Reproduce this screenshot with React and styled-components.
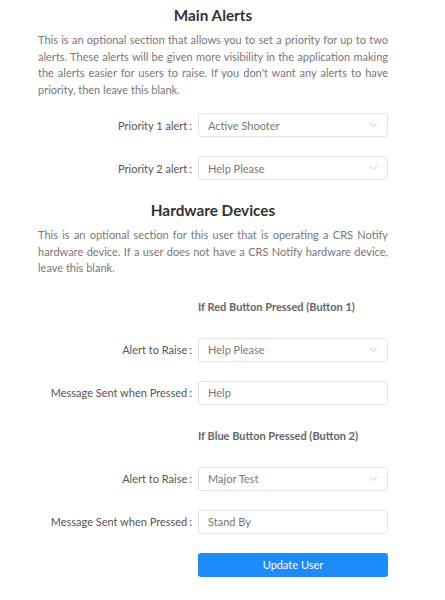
import styled, { createGlobalStyle } from "styled-components";

const GlobalStyle = createGlobalStyle`
    body {
        margin: 0;
        background: #fff;
        font-family: Lato, "Noto Sans", sans-serif;
    }
`;

const Page = styled.div`
    width: 350px;
    padding: 4px 0 20px 38px;
`;

const Title = styled.h2`
    margin: ${(p) => p.$top || 0}px 0 0;
    font-size: 15.3px;
    font-weight: 700;
    color: #333;
    text-align: center;
    line-height: 22px;
`;

const Intro = styled.p`
    margin: 6px 0 0;
    font-size: 11px;
    line-height: 16.5px;
    color: #777;
    text-align: justify;
`;

const Form = styled.div`
    display: flex;
    flex-direction: column;
    gap: 19px;
    margin: ${(p) => p.$top || 0}px 0 0;
`;

const Row = styled.div`
    display: grid;
    grid-template-columns: 160px 190px;
    align-items: center;
`;

const Label = styled.label`
    text-align: right;
    padding-right: 6px;
    font-size: 11px;
    color: #555;
    white-space: nowrap;

    &::after {
        content: ":";
        margin-left: 2px;
    }
`;

const Field = styled.div`
    position: relative;
    height: 24px;
    box-sizing: border-box;
    border: 1px solid #e3e3e3;
    border-radius: 3px;
    background: #fff;
    display: flex;
    align-items: center;
    padding: 0 9px;
    font-size: 11px;
    color: #777;
`;

const Arrow = styled.svg`
    position: absolute;
    right: 9px;
    top: 8px;
`;

const SubHead = styled.div`
    grid-column: 2;
    font-size: 11px;
    font-weight: 700;
    color: #666;
    line-height: 24px;
`;

const Button = styled.button`
    grid-column: 2;
    height: 24px;
    border: none;
    border-radius: 3px;
    background: #1d8cf8;
    color: #fff;
    font-family: inherit;
    font-size: 11px;
`;

function Select({ value }) {
    return (
        <Field>
            {value}
            <Arrow width="9" height="6" viewBox="0 0 9 6">
                <path d="M1 1 L4.5 4.5 L8 1" fill="none" stroke="#ccc" strokeWidth="1" />
            </Arrow>
        </Field>
    );
}

export default function App() {
    return (
        <>
            <GlobalStyle />
            <Page>
                <Title>Main Alerts</Title>
                <Intro>
                    This is an optional section that allows you to set a priority for up to two
                    alerts. These alerts will be given more visibility in the application making
                    the alerts easier for users to raise. If you don't want any alerts to have
                    priority, then leave this blank.
                </Intro>
                <Form $top={15}>
                    <Row>
                        <Label>Priority 1 alert</Label>
                        <Select value="Active Shooter" />
                    </Row>
                    <Row>
                        <Label>Priority 2 alert</Label>
                        <Select value="Help Please" />
                    </Row>
                </Form>

                <Title $top={19}>Hardware Devices</Title>
                <Intro>
                    This is an optional section for this user that is operating a CRS Notify
                    hardware device. If a user does not have a CRS Notify hardware device,
                    leave this blank.
                </Intro>
                <Form $top={18}>
                    <Row>
                        <SubHead>If Red Button Pressed (Button 1)</SubHead>
                    </Row>
                    <Row>
                        <Label>Alert to Raise</Label>
                        <Select value="Help Please" />
                    </Row>
                    <Row>
                        <Label>Message Sent when Pressed</Label>
                        <Field>Help</Field>
                    </Row>
                    <Row>
                        <SubHead>If Blue Button Pressed (Button 2)</SubHead>
                    </Row>
                    <Row>
                        <Label>Alert to Raise</Label>
                        <Select value="Major Test" />
                    </Row>
                    <Row>
                        <Label>Message Sent when Pressed</Label>
                        <Field>Stand By</Field>
                    </Row>
                    <Row>
                        <Button>Update User</Button>
                    </Row>
                </Form>
            </Page>
        </>
    );
}
